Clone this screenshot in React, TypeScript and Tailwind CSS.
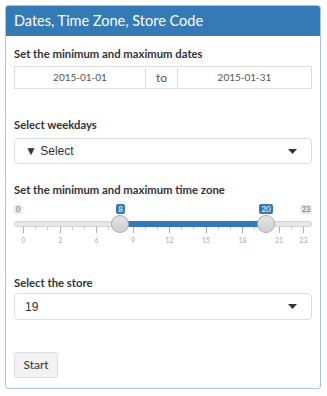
import React from "react";

const ticks = Array.from({ length: 24 }, (_, i) => i);
const major = [0, 3, 6, 9, 12, 15, 18, 21, 23];
const pos = (v: number) => 9 + v * 12.17;

function Caret() {
  return (
    <svg width="9" height="5" viewBox="0 0 9 5" className="shrink-0">
      <path d="M0 0 L9 0 L4.5 5 Z" fill="#333" />
    </svg>
  );
}

export default function App() {
  return (
    <div className="w-[327px] h-[396px] bg-white p-[5px] pr-[6px] pb-[7px]" style={{ fontFamily: "Lato, 'Open Sans', sans-serif" }}>
      <div className="h-full border border-[#a9c4e2] rounded-[3px] flex flex-col overflow-hidden">
        <div className="h-[30px] bg-[#337ab7] text-white text-[14.5px] flex items-center px-[8px] shrink-0">
          Dates, Time Zone, Store Code
        </div>
        <div className="px-[8px] flex flex-col text-[#333]">
          <div className="mt-[11px] text-[11.3px] font-bold leading-[14px]">Set the minimum and maximum dates</div>
          <div className="mt-[5px] flex h-[23px] text-[10px] text-[#555]">
            <div className="w-[132px] border border-[#ddd] flex items-center justify-center">2015-01-01</div>
            <div className="w-[31px] border-y border-[#ddd] bg-white flex items-center justify-center text-[12px]">to</div>
            <div className="flex-1 border border-[#ddd] flex items-center justify-center">2015-01-31</div>
          </div>

          <div className="mt-[29px] text-[11.3px] font-bold leading-[14px]">Select weekdays</div>
          <div className="mt-[6px] h-[26px] border border-[#ddd] rounded-[4px] flex items-center justify-between pl-[10px] pr-[14px] text-[12px] text-[#333]" style={{ fontFamily: "'Liberation Sans', Arial, sans-serif" }}>
            <span>▼ Select</span>
            <Caret />
          </div>

          <div className="mt-[19px] text-[11.3px] font-bold leading-[14px]">Set the minimum and maximum time zone</div>
          <div className="relative h-[48px] mt-[2px]">
            <div className="absolute left-[0px] top-[6px] h-[9px] px-[2px] bg-[#e8e8e8] text-[#666] text-[7px] leading-[9px] rounded-[2px]">0</div>
            <div className="absolute right-[0px] top-[6px] h-[9px] px-[2px] bg-[#e8e8e8] text-[#666] text-[7px] leading-[9px] rounded-[2px]">23</div>
            <div className="absolute top-[5px] h-[10px] px-[2px] bg-[#337ab7] text-white text-[8px] leading-[10px] rounded-[2px]" style={{ left: pos(8) - 4 }}>8</div>
            <div className="absolute top-[5px] h-[10px] px-[2px] bg-[#337ab7] text-white text-[8px] leading-[10px] rounded-[2px]" style={{ left: pos(20) - 7 }}>20</div>
            <div className="absolute left-0 right-0 top-[22px] h-[6px] bg-[#e6e6e6] border border-[#d4d4d4] rounded-full" />
            <div className="absolute top-[22px] h-[6px] bg-[#3277c4]" style={{ left: pos(8), width: pos(20) - pos(8) }} />
            {ticks.map((t) => (
              <div
                key={t}
                className={major.includes(t) ? "absolute top-[28px] w-px h-[6px] bg-[#8fb4de]" : "absolute top-[28px] w-px h-[3px] bg-[#cccccc]"}
                style={{ left: pos(t) }}
              />
            ))}
            {major.map((t) => (
              <div key={"l" + t} className="absolute top-[37px] w-[20px] -ml-[10px] text-center text-[7px] text-[#aaa] leading-[8px]" style={{ left: pos(t) + 0.5 }}>
                {t}
              </div>
            ))}
            <div className="absolute top-[16px] w-[18px] h-[18px] -ml-[9px] rounded-full bg-gradient-to-b from-[#e4e4e4] to-[#cfcfcf] border border-[#aaa]" style={{ left: pos(8) }} />
            <div className="absolute top-[16px] w-[18px] h-[18px] -ml-[9px] rounded-full bg-gradient-to-b from-[#e4e4e4] to-[#cfcfcf] border border-[#aaa]" style={{ left: pos(20) }} />
          </div>

          <div className="mt-[29px] text-[11.3px] font-bold leading-[14px]">Select the store</div>
          <div className="mt-[3px] h-[27px] border border-[#ddd] rounded-[4px] flex items-center justify-between pl-[10px] pr-[14px] text-[12px] text-[#333]" style={{ fontFamily: "'Liberation Sans', Arial, sans-serif" }}>
            <span>19</span>
            <Caret />
          </div>

          <div className="mt-[32px]">
            <div className="w-[44px] h-[26px] bg-[#f2f2f2] border border-[#ddd] rounded-[3px] flex items-center justify-center text-[12px] text-[#333]">Start</div>
          </div>
        </div>
      </div>
    </div>
  );
}
